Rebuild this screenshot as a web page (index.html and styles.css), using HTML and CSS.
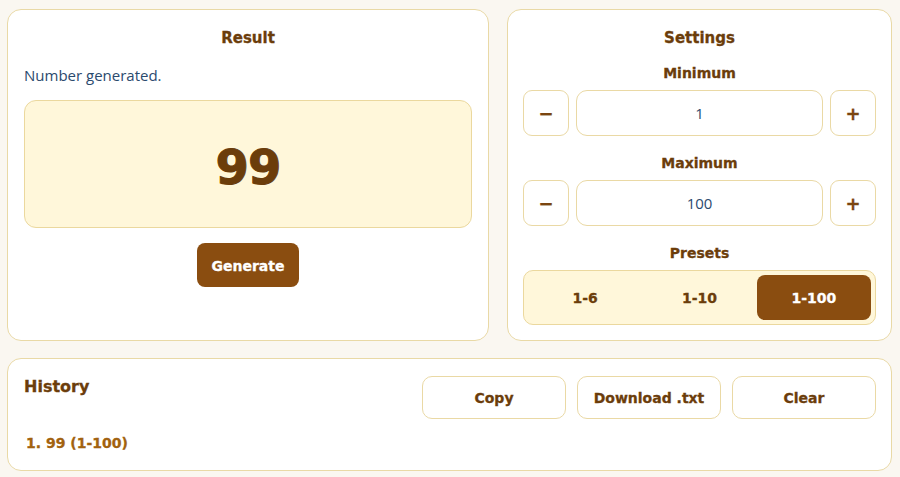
FILE: index.html
```html
<!DOCTYPE html>
<html lang="en">
<head>
<meta charset="utf-8">
<title>Random Number Generator</title>
<link rel="stylesheet" href="styles.css">
</head>
<body>
<main class="app">
  <div class="top">
    <section class="card result">
      <h2 class="card-title">Result</h2>
      <p class="status">Number generated.</p>
      <div class="display"><span class="number">99</span></div>
      <div class="center"><button class="primary">Generate</button></div>
    </section>
    <section class="card settings">
      <h2 class="card-title">Settings</h2>
      <div class="field">
        <div class="label">Minimum</div>
        <div class="stepper">
          <button class="step">&minus;</button>
          <div class="value">1</div>
          <button class="step">+</button>
        </div>
      </div>
      <div class="field">
        <div class="label">Maximum</div>
        <div class="stepper">
          <button class="step">&minus;</button>
          <div class="value">100</div>
          <button class="step">+</button>
        </div>
      </div>
      <div class="field">
        <div class="label">Presets</div>
        <div class="segments">
          <button class="seg">1-6</button>
          <button class="seg">1-10</button>
          <button class="seg active">1-100</button>
        </div>
      </div>
    </section>
  </div>
  <section class="card history">
    <div class="history-head">
      <h2 class="history-title">History</h2>
      <div class="actions">
        <button class="ghost">Copy</button>
        <button class="ghost">Download .txt</button>
        <button class="ghost">Clear</button>
      </div>
    </div>
    <ol class="list">
      <li>1. 99 (1-100)</li>
    </ol>
  </section>
</main>
</body>
</html>
```

FILE: styles.css
```css
* { box-sizing: border-box; }
html, body { margin: 0; padding: 0; }
body {
  background: #faf7f1;
  font-family: "DejaVu Sans", sans-serif;
  color: #6b3d0b;
}
.app {
  padding: 9px 8px 7px 7px;
  display: flex;
  flex-direction: column;
  gap: 17px;
}
.top {
  display: grid;
  grid-template-columns: 482px 385px;
  gap: 18px;
}
.card {
  background: #fff;
  border: 1px solid #e9d9a6;
  border-radius: 14px;
}
.card-title {
  margin: 0;
  text-align: center;
  font-size: 15px;
  font-weight: 700;
  color: #6b3d0b;
  line-height: 20px;
  -webkit-text-stroke: 0.3px currentColor;
}
button {
  font-family: "DejaVu Sans", sans-serif;
  font-weight: 700;
  cursor: pointer;
  -webkit-text-stroke: 0.3px currentColor;
}
.result {
  height: 332px;
  padding: 18px 16px 0 16px;
}
.status {
  margin: 17px 0 0 0;
  font-family: "Open Sans", sans-serif;
  font-size: 15px;
  color: #2b4a6e;
  line-height: 20px;
}
.display {
  margin-top: 15px;
  height: 128px;
  padding-top: 6px;
  background: #fff7da;
  border: 1px solid #ebd89e;
  border-radius: 12px;
  display: flex;
  align-items: center;
  justify-content: center;
}
.number {
  font-size: 48px;
  font-weight: 700;
  color: #6b3d0b;
  letter-spacing: -1px;
  -webkit-text-stroke: 1px #6b3d0b;
}
.center { display: flex; justify-content: center; margin-top: 15px; }
.primary {
  width: 102px;
  height: 44px;
  padding-top: 3px;
  background: #8a4d10;
  color: #fff;
  border: none;
  border-radius: 8px;
  font-size: 14px;
}
.settings {
  height: 332px;
  padding: 18px 15px 0 15px;
}
.field { margin-top: 16px; }
.field + .field { margin-top: 18px; }
.label {
  text-align: center;
  font-size: 14px;
  font-weight: 700;
  line-height: 18px;
  color: #6b3d0b;
  -webkit-text-stroke: 0.3px currentColor;
}
.stepper {
  margin-top: 8px;
  display: flex;
  gap: 7px;
  height: 46px;
}
.step {
  width: 46px;
  flex: none;
  background: #fff;
  border: 1px solid #ead9a5;
  border-radius: 9px;
  color: #7a4510;
  font-size: 18px;
  padding: 0;
}
.value {
  flex: 1;
  border: 1px solid #ead9a5;
  border-radius: 11px;
  display: flex;
  align-items: center;
  justify-content: center;
  font-family: "Open Sans", sans-serif;
  font-size: 15px;
  color: #2b4a6e;
}
.segments {
  margin-top: 8px;
  height: 55px;
  background: #fff7da;
  border: 1px solid #ebd89e;
  border-radius: 10px;
  padding: 4px;
  display: grid;
  grid-template-columns: 1fr 1fr 1fr;
}
.seg {
  background: transparent;
  border: none;
  border-radius: 8px;
  color: #6b3d0b;
  font-size: 14px;
}
.seg.active { background: #8a4d10; color: #fff; }
.history {
  height: 113px;
  padding: 17px 15px 0 16px;
}
.history-head {
  display: flex;
  justify-content: space-between;
  align-items: flex-start;
}
.history-title {
  margin: 0;
  font-size: 16px;
  font-weight: 700;
  line-height: 22px;
  color: #6b3d0b;
  -webkit-text-stroke: 0.3px currentColor;
}
.actions { display: flex; gap: 11px; }
.ghost {
  width: 144px;
  height: 43px;
  background: #fff;
  border: 1px solid #ead9a5;
  border-radius: 10px;
  color: #6b3d0b;
  font-size: 14px;
}
.list {
  list-style: none;
  margin: 16px 0 0 2px;
  padding: 0;
  font-size: 14px;
  font-weight: 700;
  color: #a2620f;
  -webkit-text-stroke: 0.3px currentColor;
}
```
